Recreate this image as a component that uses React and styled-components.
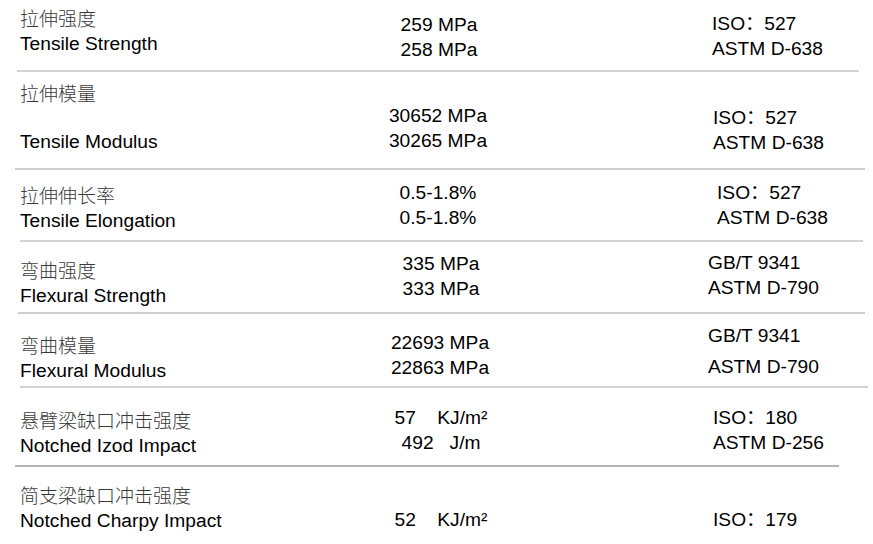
import React from 'react';
import styled, { createGlobalStyle } from 'styled-components';

const GlobalStyle = createGlobalStyle`
  html, body {
    margin: 0;
    padding: 0;
    background: #fff;
  }
  body {
    font-family: "Liberation Sans", "Noto Sans CJK SC", Arial, sans-serif;
    color: #000;
  }
`;

// 每一行的数据和偏移量（依照截图量出来的）
const rows = [
  {
    cn: '拉伸强度',
    en: 'Tensile Strength',
    labelTop: 5,
    enGap: 1,
    values: ['259 MPa', '258 MPa'],
    valueTop: 12,
    valueShift: -1,
    stds: ['ISO：527', 'ASTM D-638'],
    stdTop: 11,
    stdGap: 0,
    stdIndent: 192,
    height: 70,
    rule: { left: 17, right: 859, color: '#d2d2d2' },
  },
  {
    cn: '拉伸模量',
    en: 'Tensile Modulus',
    labelTop: 8,
    enGap: 24,
    values: ['30652 MPa', '30265 MPa'],
    valueTop: 31,
    valueShift: -2,
    stds: ['ISO：527', 'ASTM D-638'],
    stdTop: 33,
    stdGap: 0,
    stdIndent: 193,
    height: 96,
    rule: { left: 15, right: 865, color: '#cfcfcf' },
  },
  {
    cn: '拉伸伸长率',
    en: 'Tensile Elongation',
    labelTop: 12,
    enGap: 1,
    values: ['0.5-1.8%', '0.5-1.8%'],
    valueTop: 10,
    valueShift: -2,
    stds: ['ISO：527', 'ASTM D-638'],
    stdTop: 10,
    stdGap: 0,
    stdIndent: 197,
    height: 70,
    rule: { left: 20, right: 863, color: '#d2d2d2' },
  },
  {
    cn: '弯曲强度',
    en: 'Flexural Strength',
    labelTop: 15,
    enGap: 1,
    values: ['335 MPa', '333 MPa'],
    valueTop: 9,
    valueShift: 1,
    stds: ['GB/T 9341', 'ASTM D-790'],
    stdTop: 8,
    stdGap: 0,
    stdIndent: 188,
    height: 70,
    rule: { left: 18, right: 865, color: '#cfcfcf' },
  },
  {
    cn: '弯曲模量',
    en: 'Flexural Modulus',
    labelTop: 18,
    enGap: 1,
    values: ['22693 MPa', '22863 MPa'],
    valueTop: 16,
    valueShift: 0,
    stds: ['GB/T 9341', 'ASTM D-790'],
    stdTop: 9,
    stdGap: 6,
    stdIndent: 188,
    height: 72,
    rule: { left: 20, right: 868, color: '#d2d2d2' },
  },
  {
    cn: '悬臂梁缺口冲击强度',
    en: 'Notched Izod Impact',
    labelTop: 19,
    enGap: 1,
    values: ['57    KJ/m²', ' 492   J/m '],
    valueTop: 17,
    valueShift: 1,
    stds: ['ISO：180', 'ASTM D-256'],
    stdTop: 17,
    stdGap: 0,
    stdIndent: 193,
    height: 77,
    rule: { left: 15, right: 839, color: '#b4b4b4' },
  },
  {
    cn: '简支梁缺口冲击强度',
    en: 'Notched Charpy Impact',
    labelTop: 15,
    enGap: 1,
    values: ['52    KJ/m²'],
    valueTop: 40,
    valueShift: 1,
    stds: ['ISO：179'],
    stdTop: 40,
    stdGap: 0,
    stdIndent: 193,
    height: 77,
    rule: null,
  },
];

function App() {
  return (
    <>
      <GlobalStyle />
      <Sheet>
        {rows.map((row) => (
          <Section key={row.en}>
            <Row $height={row.height}>
              <Label $top={row.labelTop}>
                <CnLine>{row.cn}</CnLine>
                <EnLine $gap={row.enGap}>{row.en}</EnLine>
              </Label>
              <Values $top={row.valueTop} $shift={row.valueShift}>
                {row.values.map((v, i) => (
                  <Line key={i}>{v}</Line>
                ))}
              </Values>
              <Standards $top={row.stdTop} $indent={row.stdIndent}>
                {row.stds.map((s, i) => (
                  <Line key={i} $gap={i > 0 ? row.stdGap : 0}>
                    {s}
                  </Line>
                ))}
              </Standards>
            </Row>
            {row.rule && (
              <Rule
                $left={row.rule.left}
                $width={row.rule.right - row.rule.left}
                $color={row.rule.color}
              />
            )}
          </Section>
        ))}
      </Sheet>
    </>
  );
}

export default App;

const Sheet = styled.div`
  width: 873px;
  height: 544px;
  overflow: hidden;
  background: #fff;
`;

const Section = styled.div`
  display: flex;
  flex-direction: column;
`;

const Row = styled.div`
  display: grid;
  grid-template-columns: 340px 200px 1fr;
  height: ${(p) => p.$height}px;
`;

const Label = styled.div`
  padding-left: 20px;
  padding-top: ${(p) => p.$top}px;
`;

const Line = styled.div`
  font-size: 19.2px;
  line-height: 25px;
  white-space: pre;
  margin-top: ${(p) => p.$gap || 0}px;
`;

const CnLine = styled(Line)`
  font-family: "Noto Sans CJK SC", sans-serif;
  font-weight: 300;
  font-size: 19px;
  color: #3a3a3a;
`;

const EnLine = styled(Line)`
  color: #000;
`;

const Values = styled.div`
  padding-top: ${(p) => p.$top}px;
  text-align: center;
  transform: translateX(${(p) => p.$shift}px);
`;

const Standards = styled.div`
  padding-top: ${(p) => p.$top}px;
  padding-left: ${(p) => p.$indent - 20}px;
`;

const Rule = styled.div`
  height: 2px;
  margin-left: ${(p) => p.$left}px;
  width: ${(p) => p.$width}px;
  background: ${(p) => p.$color};
`;
